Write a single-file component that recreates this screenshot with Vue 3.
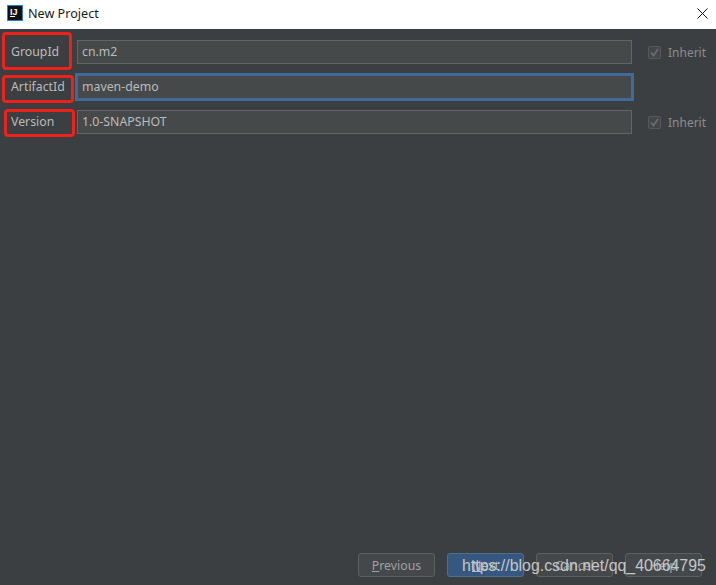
<script setup>
const rows = [
  { label: 'GroupId', value: 'cn.m2', inherit: true },
  { label: 'ArtifactId', value: 'maven-demo', inherit: false, focus: true },
  { label: 'Version', value: '1.0-SNAPSHOT', inherit: true },
]
const marks = [
  { left: '2px', top: '32px', width: '70px', height: '38px' },
  { left: '2px', top: '75px', width: '72px', height: '28px' },
  { left: '4px', top: '109px', width: '71px', height: '28px' },
]
</script>

<template>
  <div class="win">
    <header class="title">
      <svg class="logo" width="16" height="16" viewBox="0 0 16 16">
        <rect x="0.5" y="0.5" width="15" height="15" fill="#111" stroke="#2f7fd0" />
        <text x="3" y="9.5" class="logo-t">IJ</text>
        <rect x="3" y="11" width="5" height="1" fill="#fff" />
      </svg>
      <span class="title-text">New Project</span>
      <svg class="close" width="11" height="11" viewBox="0 0 11 11">
        <path d="M0.5 0.5 L10.5 10.5 M10.5 0.5 L0.5 10.5" stroke="#111" stroke-width="1" fill="none" />
      </svg>
    </header>

    <main class="form">
      <div v-for="r in rows" :key="r.label" class="row">
        <label class="lab">{{ r.label }}</label>
        <div class="field" :class="{ focus: r.focus }">{{ r.value }}</div>
        <div v-if="r.inherit" class="inh">
          <span class="check">
            <svg width="11" height="11" viewBox="0 0 11 11">
              <path d="M2 5.5 L4.5 8.5 L9 2" stroke="#6a6c6d" stroke-width="1.8" fill="none" />
            </svg>
          </span>
          <span class="inh-t">Inherit</span>
        </div>
      </div>
    </main>

    <footer class="foot">
      <button class="btn"><u>P</u>revious</button>
      <button class="btn primary"><u>N</u>ext</button>
      <button class="btn">Cancel</button>
      <button class="btn">Help</button>
    </footer>

    <div v-for="(m, i) in marks" :key="i" class="mark" :style="m"></div>
    <div class="wm">https://blog.csdn.net/qq_40664795</div>
  </div>
</template>

<style>
html, body { margin: 0; background: #3c3f41; }
</style>

<style scoped>
.win {
  position: relative;
  width: 716px;
  height: 585px;
  display: flex;
  flex-direction: column;
  background: #3c3f41;
  overflow: hidden;
  font-family: "Noto Sans", "Open Sans", sans-serif;
  font-size: 12.3px;
  color: #bbbbbb;
}
.title {
  height: 29px;
  flex: none;
  box-sizing: border-box;
  background: #fff;
  display: flex;
  align-items: center;
  padding: 0 8px 3px 7px;
  color: #1a1a1a;
}
.logo { flex: none; }
.logo-t { font: bold 9px "Liberation Sans", sans-serif; fill: #fff; }
.title-text { margin: 2px 0 0 5px; font-size: 12.6px; line-height: 16px; }
.close { margin-left: auto; }
.form {
  flex: 1;
  display: flex;
  flex-direction: column;
  gap: 11px;
  padding: 11px 0 0 11px;
}
.row {
  display: flex;
  align-items: center;
  height: 24px;
}
.lab { width: 66px; flex: none; line-height: 22px; }
.field {
  width: 555px;
  height: 24px;
  flex: none;
  box-sizing: border-box;
  border: 1px solid #646464;
  background: #45494a;
  padding-left: 4px;
  line-height: 22px;
}
.field.focus {
  border-color: #3f6a9a;
  box-shadow: 0 0 0 2px #3f6a9a;
}
.inh {
  display: flex;
  align-items: center;
  gap: 7px;
  margin-left: 16px;
  color: #8a8c8d;
}
.inh-t { font-size: 12px; line-height: 20px; margin-top: 2px; }
.check {
  width: 13px;
  height: 13px;
  box-sizing: border-box;
  border: 1px solid #565859;
  border-radius: 2px;
  background: #43474a;
  display: flex;
  align-items: center;
  justify-content: center;
}
.foot {
  flex: none;
  display: flex;
  justify-content: flex-end;
  gap: 12px;
  padding: 0 14px 8px 0;
}
.btn {
  width: 77px;
  height: 24px;
  box-sizing: border-box;
  border: 1px solid #5e6060;
  border-radius: 3px;
  background: #45484a;
  color: #a0a2a3;
  font: inherit;
  padding: 0;
}
.btn.primary {
  background: #365880;
  border-color: #4c708c;
  color: #bbbbbb;
}
.mark {
  position: absolute;
  box-sizing: border-box;
  border: 3px solid #f0201a;
  border-radius: 4px;
}
.wm {
  position: absolute;
  left: 462px;
  top: 557px;
  font: 15.9px/18px "Liberation Sans", Arial, sans-serif;
  color: #c4c6c7;
  white-space: nowrap;
}
</style>
